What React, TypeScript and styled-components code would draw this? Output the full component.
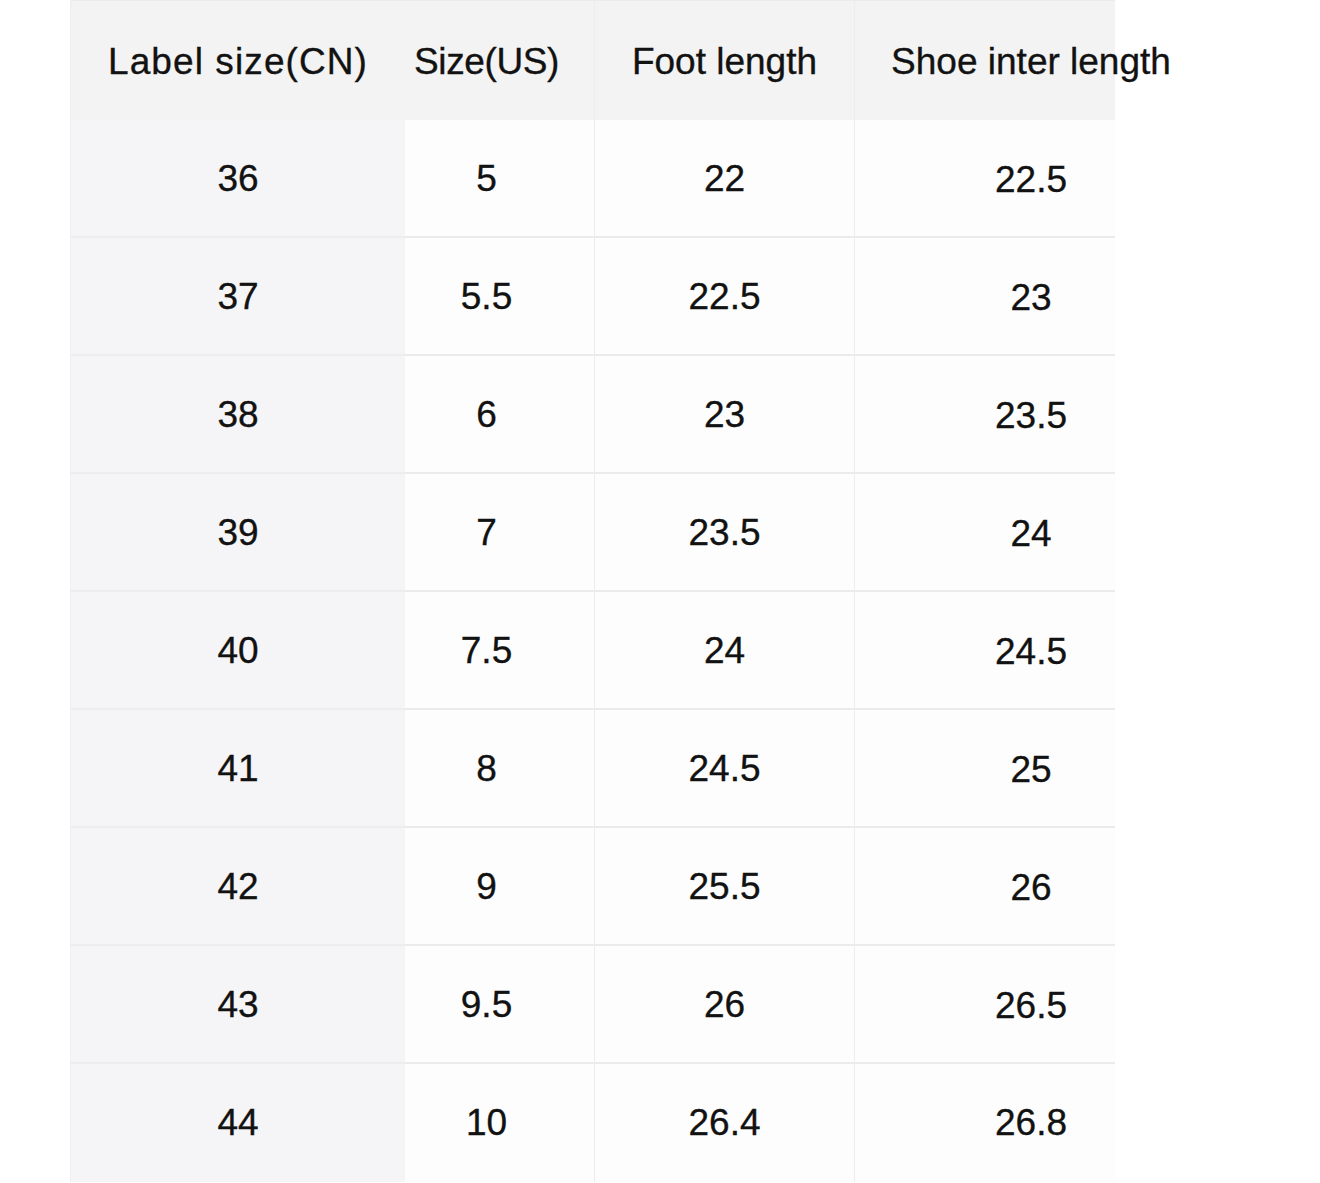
import React from "react";
import styled, { createGlobalStyle, css } from "styled-components";

const GlobalStyle = createGlobalStyle`
  html, body {
    margin: 0;
    padding: 0;
    background: #ffffff;
  }
`;

const headers = ["Label size(CN)", "Size(US)", "Foot length", "Shoe inter length"];

const rows = [
  ["36", "5", "22", "22.5"],
  ["37", "5.5", "22.5", "23"],
  ["38", "6", "23", "23.5"],
  ["39", "7", "23.5", "24"],
  ["40", "7.5", "24", "24.5"],
  ["41", "8", "24.5", "25"],
  ["42", "9", "25.5", "26"],
  ["43", "9.5", "26", "26.5"],
  ["44", "10", "26.4", "26.8"],
];

const LINE = "#ebebeb";
const FADE = 260;

const Page = styled.div`
  width: 1320px;
  height: 1183px;
  padding-left: 70px;
  box-sizing: border-box;
  overflow: hidden;
  font-family: "Liberation Sans", Arial, sans-serif;
  color: #121212;
`;

const Table = styled.div`
  display: grid;
  grid-template-columns: 335px 190px 260px 352px;
  grid-template-rows: 120px repeat(9, 118px);
`;

const base = css<{ $col: number }>`
  display: flex;
  align-items: center;
  justify-content: center;
  font-size: 37px;
  box-sizing: border-box;
  white-space: nowrap;
  -webkit-text-stroke: 0.35px #121212;
  ${(p) => p.$col === 0 && "border-left: 1px solid #eeeeee;"}
  ${(p) => p.$col === 1 && "padding-right: 26px;"}
  ${(p) => (p.$col === 1 || p.$col === 2) && "border-right: 1px solid #ededed;"}
`;

const HeadCell = styled.div<{ $col: number }>`
  ${base}
  letter-spacing: ${(p) => (p.$col === 0 ? "1.1px" : p.$col === 1 ? "-0.4px" : "0")};
  padding-top: 3px;
  background: ${(p) =>
    p.$col === 3
      ? `linear-gradient(#ececec, #ececec) no-repeat left top / ${FADE}px 1px,
         linear-gradient(to right, #f3f3f3 ${FADE}px, #ffffff ${FADE}px)`
      : "#f3f3f3"};
  ${(p) => p.$col !== 3 && "border-top: 1px solid #ececec;"}
`;

const Cell = styled.div<{ $col: number; $last: boolean }>`
  ${base}
  background-color: ${(p) =>
    p.$col === 0 ? "#f5f5f7" : p.$col === 3 ? "#ffffff" : "#fdfdfd"};
  ${(p) =>
    p.$col === 3 &&
    css`
      background-image: linear-gradient(to right, #fdfdfd ${FADE}px, #ffffff ${FADE}px);
    `}
  ${(p) =>
    !p.$last &&
    (p.$col === 3
      ? css`
          background-image: linear-gradient(${LINE}, ${LINE}),
            linear-gradient(to right, #fdfdfd ${FADE}px, #ffffff ${FADE}px);
          background-repeat: no-repeat;
          background-position: left bottom, left top;
          background-size: ${FADE}px 2px, 100% 100%;
        `
      : css`
          border-bottom: 2px solid ${p.$col === 0 ? "#ededef" : LINE};
        `)}
  padding-top: ${(p) => (p.$last ? "0" : "2px")};
`;

export default function App() {
  return (
    <>
      <GlobalStyle />
      <Page>
        <Table>
          {headers.map((h, i) => (
            <HeadCell key={h} $col={i}>
              {h}
            </HeadCell>
          ))}
          {rows.map((row, r) =>
            row.map((v, c) => (
              <Cell key={`${r}-${c}`} $col={c} $last={r === rows.length - 1}>
                {v}
              </Cell>
            ))
          )}
        </Table>
      </Page>
    </>
  );
}
